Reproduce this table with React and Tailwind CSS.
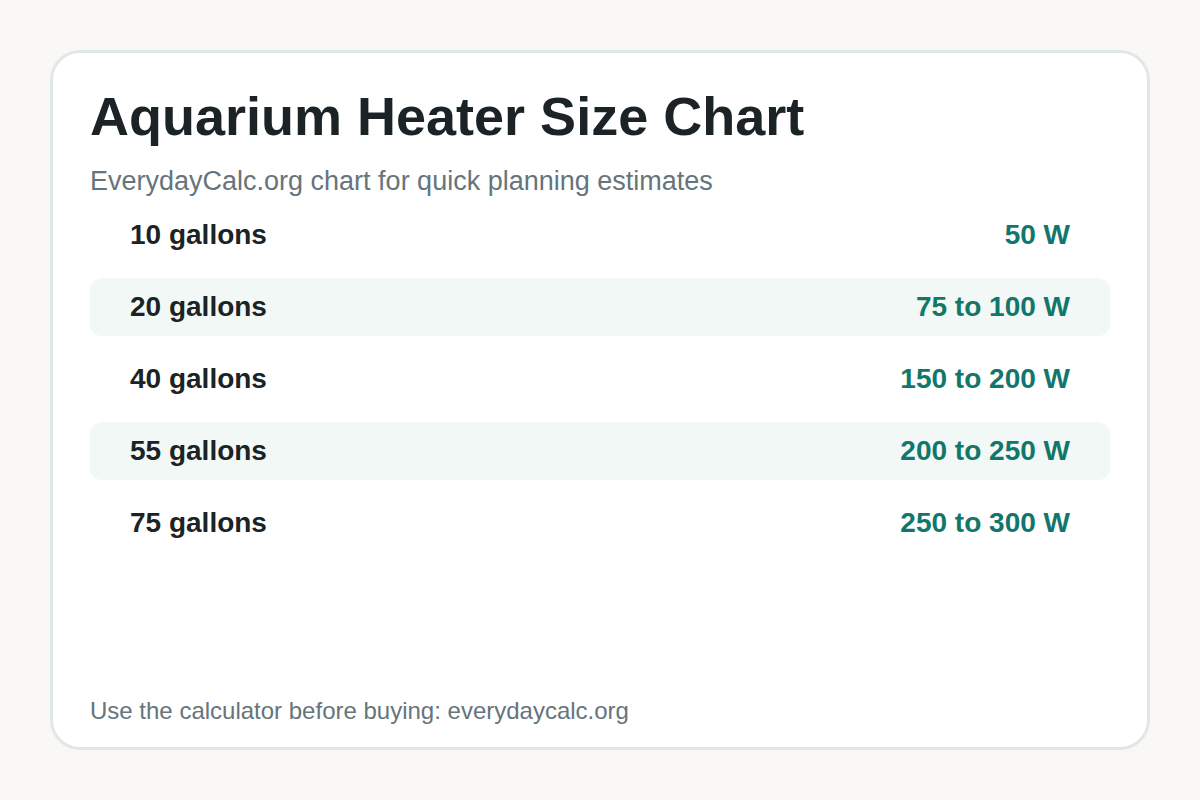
const ROWS = [
  { size: '10 gallons', watts: '50 W' },
  { size: '20 gallons', watts: '75 to 100 W' },
  { size: '40 gallons', watts: '150 to 200 W' },
  { size: '55 gallons', watts: '200 to 250 W' },
  { size: '75 gallons', watts: '250 to 300 W' },
]

export default function App() {
  return (
    <div className="w-[1200px] h-[800px] bg-[#f9f8f5] p-[50px] font-['Liberation_Sans',Arial,sans-serif]">
      <div className="h-full flex flex-col bg-white border-[3px] border-[#dfe8e6] rounded-[30px] px-[37px] pt-[36px] pb-[22px]">
        <h1 className="text-[54px] leading-[54px] font-bold text-[#1b2327]">Aquarium Heater Size Chart</h1>
        <p className="mt-[22px] text-[27px] leading-[32px] text-[#66747b]">
          EverydayCalc.org chart for quick planning estimates
        </p>

        <div className="mt-[9px] flex flex-col gap-[14px]">
          {ROWS.map((row, i) => (
            <div
              key={row.size}
              className={[
                'h-[58px] flex items-center justify-between px-[40px] rounded-[12px]',
                i % 2 === 1 ? 'bg-[#f2f8f6]' : '',
              ].join(' ')}
            >
              <span className="text-[28px] leading-[32px] font-bold text-[#1b2327]">{row.size}</span>
              <span className="text-[28px] leading-[32px] font-bold text-[#13766a]">{row.watts}</span>
            </div>
          ))}
        </div>

        <p className="mt-auto text-[24px] leading-[28px] text-[#66747b]">
          Use the calculator before buying: everydaycalc.org
        </p>
      </div>
    </div>
  )
}
